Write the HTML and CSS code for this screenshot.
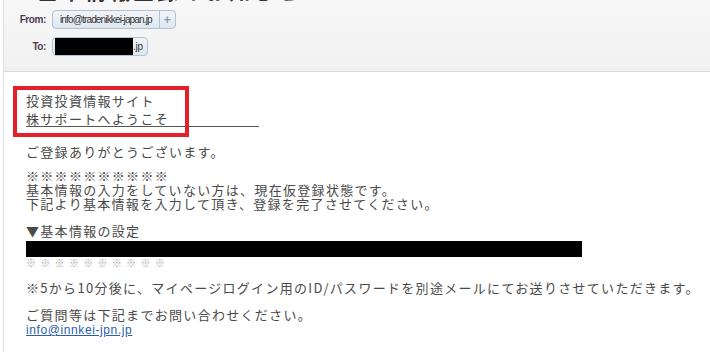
FILE: index.html
```html
<!DOCTYPE html>
<html lang="ja">
<head>
    <meta charset="UTF-8">
    <title>基本情報の設定</title>
    <link rel="stylesheet" href="styles.css">
</head>
<body>
    <div class="mail">
        <header class="mail-head">
            <div class="subject">基本情報登録のお知らせ</div>
            <div class="addr-row">
                <span class="addr-label">From:</span>
                <span class="pill">
                    <span class="pill-text">info@tradenikkei-japan.jp</span>
                    <span class="pill-add">+</span>
                </span>
            </div>
            <div class="addr-row">
                <span class="addr-label">To:</span>
                <span class="pill">
                    <span class="pill-text pill-to"><span class="redact-to"></span>.jp</span>
                </span>
            </div>
        </header>

        <main class="mail-body">
            <p class="title">投資投資情報サイト<br><span class="title-line">株サポートへようこそ&emsp;&emsp;&emsp;&emsp;&emsp;&emsp;&nbsp;</span></p>

            <p class="thanks">ご登録ありがとうございます。</p>

            <p>※※※※※※※※※※<br>
            基本情報の入力をしていない方は、現在仮登録状態です。<br>
            下記より基本情報を入力して頂き、登録を完了させてください。</p>

            <div class="setting">
                <p class="setting-title">▼基本情報の設定</p>
                <div class="redact-url"></div>
                <p class="marks">※※※※※※※※※※</p>
            </div>

            <p>※5から10分後に、マイページログイン用のID/パスワードを別途メールにてお送りさせていただきます。</p>

            <p>ご質問等は下記までお問い合わせください。<br>
            <a class="mail-link" href="#">info@innkei-jpn.jp</a></p>
        </main>

        <div class="highlight"></div>
    </div>
</body>
</html>
```

FILE: styles.css
```css
* {
    margin: 0;
    padding: 0;
    box-sizing: border-box;
}

body {
    font-family: "Noto Sans CJK JP", "Liberation Sans", sans-serif;
    background: #fff;
    width: 710px;
    height: 352px;
    overflow: hidden;
}

.mail {
    position: relative;
    height: 352px;
    margin-left: 3px;
    border-left: 1px solid #e2e2e2;
}

/* ヘッダー */
.mail-head {
    background: linear-gradient(#f7f7f7, #f1f1f1);
    border-bottom: 1px solid #d9d9d9;
    height: 72px;
    overflow: hidden;
}

.subject {
    margin: -20px 0 0 33px;
    height: 22px;
    font-size: 21px;
    line-height: 21px;
    font-weight: bold;
    color: #333;
    letter-spacing: 3px;
}

.addr-row {
    display: flex;
    align-items: center;
    height: 19px;
    margin-top: 8px;
}

.addr-row:first-of-type {
    margin-top: 11px;
}

.addr-label {
    width: 48px;
    padding-right: 6px;
    text-align: right;
    font-family: "Liberation Sans", Arial, sans-serif;
    font-size: 10px;
    font-weight: bold;
    letter-spacing: -0.4px;
    color: #4d3a52;
}

.pill {
    display: flex;
    height: 19px;
    border: 1px solid #b3c2d3;
    border-radius: 4px;
    background: linear-gradient(#f0f4f8, #dfe7ef);
    font-family: "Liberation Sans", Arial, sans-serif;
    font-size: 10px;
    line-height: 17px;
    color: #333;
}

.pill-text {
    padding: 0 7px 0 7px;
    letter-spacing: -0.85px;
}

.pill-to {
    display: flex;
    align-items: center;
    padding: 0 4px 0 2px;
    letter-spacing: -0.3px;
}

.redact-to {
    width: 78px;
    height: 17px;
    background: #000;
}

.pill-add {
    width: 16px;
    border-left: 1px solid #b3c2d3;
    text-align: center;
    font-size: 13px;
    font-weight: bold;
    color: #8d9fb3;
}

/* 本文 */
.mail-body {
    padding: 20px 0 0 22px;
    font-size: 13px;
    line-height: 14px;
    letter-spacing: 1.3px;
    color: #4a4a4a;
}

.mail-body p {
    margin-bottom: 13px;
}

.mail-body .title {
    line-height: 18px;
    margin-bottom: 17px;
}

.mail-body .thanks {
    margin-bottom: 10px;
}

.title-line {
    text-decoration: underline;
    text-decoration-color: #555;
    text-underline-offset: 2px;
}

.setting {
    margin-bottom: 12px;
}

.mail-body .setting-title {
    margin-bottom: 3px;
}

.redact-url {
    width: 556px;
    height: 16px;
    background: #000;
}

.mail-body .marks {
    margin: 0;
    font-size: 10px;
    line-height: 12px;
    letter-spacing: 4.3px;
    color: #a8a8a8;
}

.mail-link {
    font-family: "Liberation Sans", Arial, sans-serif;
    font-size: 12px;
    letter-spacing: 0.6px;
    color: #2a5db0;
}

/* 赤枠 */
.highlight {
    position: absolute;
    left: 9px;
    top: 86px;
    width: 176px;
    height: 51px;
    border: 4px solid #e42128;
}
```
